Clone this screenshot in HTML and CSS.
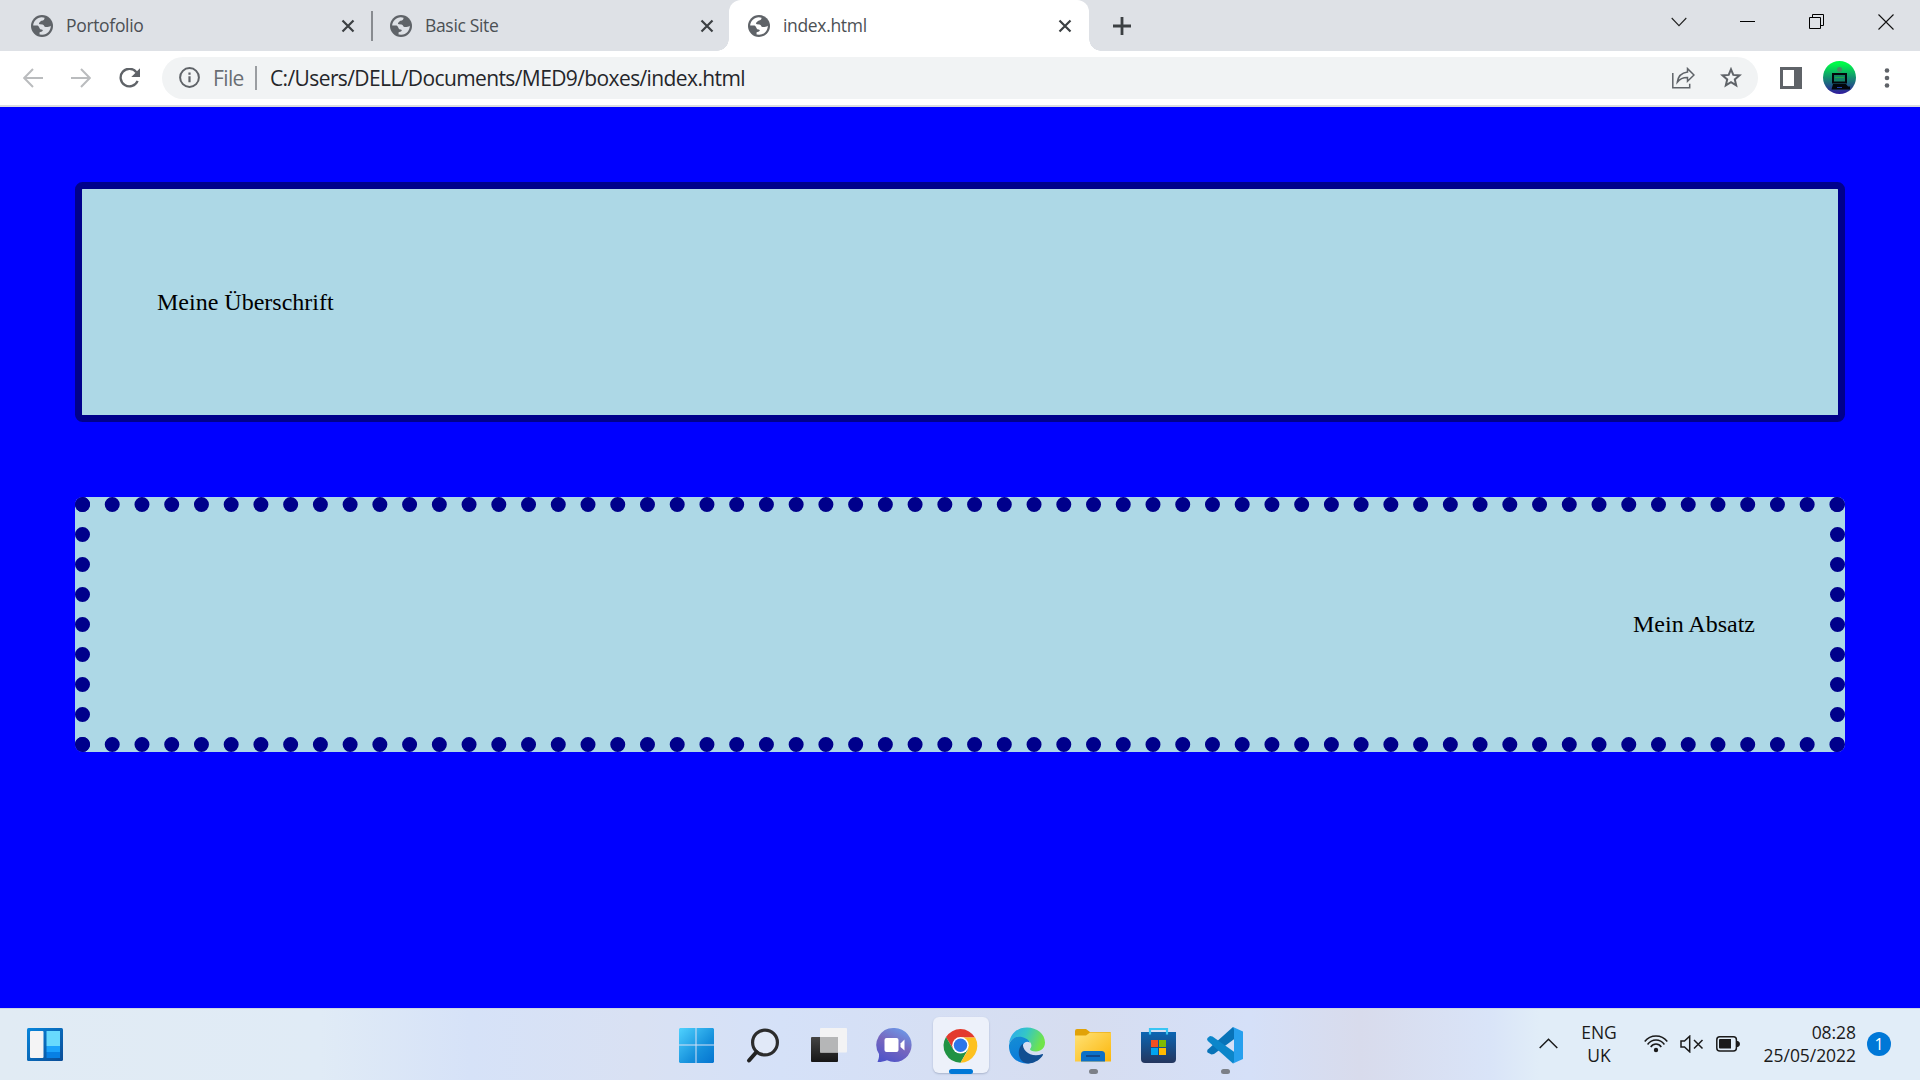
FILE: index.html
```html
<!DOCTYPE html>
<html lang="de">
<head>
<meta charset="utf-8">
<title>index.html</title>
<link rel="stylesheet" href="styles.css">
</head>
<body>
<svg class="defs" width="0" height="0" aria-hidden="true">
  <symbol id="globe" viewBox="0 0 22 22">
    <circle cx="11" cy="11" r="11" fill="#5f6368"/>
    <path fill="currentColor" d="M2.200 9.800C2.900 6 6 2.500 10.800 2.200L13.500 2.700C13.700 4 12.800 5.600 10.500 5.700C9.300 5.800 9.600 7 8.400 7.500C7.700 7.900 7.700 9.100 8.800 9.200L11.500 9.500C13.300 9.700 12.900 12 14.600 12.100C16.500 12.200 18 12 19.800 10.800C19.800 15.500 16.600 19.500 11.200 19.800L8.600 19.500L8.500 17.500C9.400 16.600 11.400 17 11.800 15.600C12 14.600 10.900 14.800 9.900 14.500C8.600 14.100 8.500 12.300 7.500 11.200C6.600 10.300 4.500 10.600 2.200 10.600Z"/>
  </symbol>
  <symbol id="cross" viewBox="0 0 14 14"><path d="M1.500 1.500L12.500 12.500M12.500 1.500L1.500 12.500" stroke="#3c4043" stroke-width="2.200"/></symbol>
</svg>

<header class="tabstrip">
  <div class="tab">
    <svg class="favicon"><use href="#globe"/></svg>
    <span class="tab-title">Portofolio</span>
    <svg class="tab-close"><use href="#cross"/></svg>
  </div>
  <div class="tab tab-second">
    <svg class="favicon"><use href="#globe"/></svg>
    <span class="tab-title">Basic Site</span>
    <svg class="tab-close"><use href="#cross"/></svg>
  </div>
  <div class="tab tab-active">
    <svg class="favicon"><use href="#globe"/></svg>
    <span class="tab-title">index.html</span>
    <svg class="tab-close"><use href="#cross"/></svg>
  </div>
  <svg class="new-tab" viewBox="0 0 18 18"><path d="M9 0V18M0 9H18" stroke="#3c4043" stroke-width="2.800"/></svg>
  <div class="window-buttons">
    <svg width="16" height="10" viewBox="0 0 16 10"><path d="M.7 1L8 8.700L15.300 1" fill="none" stroke="#222" stroke-width="1.100"/></svg>
    <svg width="15" height="15" viewBox="0 0 15 15"><path d="M0 7.500H15" stroke="#000"/></svg>
    <svg width="15" height="15" viewBox="0 0 15 15"><path d="M.5 3.500H11.500V14.500H.5ZM3.500 3.500V.5H14.500V11.500H11.500" fill="none" stroke="#000"/></svg>
    <svg width="16" height="16" viewBox="0 0 16 16"><path d="M.5 .5L15.500 15.500M15.500 .5L.5 15.500" stroke="#111" stroke-width="1.100"/></svg>
  </div>
</header>

<nav class="toolbar">
  <svg class="back" width="20" height="20" viewBox="0 0 20 20"><path d="M20 10H1.500M10 1L1.200 10L10 19" fill="none" stroke="#babcbe" stroke-width="2"/></svg>
  <svg class="forward" width="20" height="20" viewBox="0 0 20 20"><path d="M0 10H18.500M10 1L18.800 10L10 19" fill="none" stroke="#babcbe" stroke-width="2"/></svg>
  <svg class="reload" width="21" height="20" viewBox="0 0 21 20"><path d="M17.400 4.200A8.800 8.800 0 1 0 18.600 12.800" fill="none" stroke="#5f6368" stroke-width="2.300"/><path d="M21 .3V9H12.300Z" fill="#5f6368"/></svg>
  <div class="omnibox">
    <svg width="21" height="21" viewBox="0 0 21 21"><circle cx="10.500" cy="10.500" r="9.400" fill="none" stroke="#5f6368" stroke-width="2"/><path d="M10.500 9.300V15.300M10.500 5.600V7.800" stroke="#5f6368" stroke-width="2.200"/></svg>
    <span class="scheme">File</span>
    <span class="divider"></span>
    <span class="url">C:/Users/DELL/Documents/MED9/boxes/index.html</span>
    <svg class="share" width="23" height="22" viewBox="0 0 23 22"><path d="M.8 6V20.800H17.700V16.800" fill="none" stroke="#5f6368" stroke-width="1.500"/><path d="M15.500 1.600L22 8L15.500 14.200V10.600C10.900 10.500 8 11.800 5.300 15.200C6 9.800 9.400 5.900 15.500 5.100Z" fill="none" stroke="#5f6368" stroke-width="1.500"/></svg>
    <svg class="star" width="22" height="21" viewBox="0 0 22 21"><path d="M11 2.300L13.300 7.900L19.500 8.400L14.800 12.400L16.200 18.400L11 15.200L5.800 18.400L7.200 12.400L2.500 8.400L8.700 7.900Z" fill="none" stroke="#5f6368" stroke-width="2"/></svg>
  </div>
  <svg class="panel" width="22" height="22" viewBox="0 0 22 22"><path fill="#5f6368" fill-rule="evenodd" d="M0 0H22V22H0ZM3 3V19H14V3Z"/></svg>
  <svg class="avatar" width="33" height="33" viewBox="0 0 33 33">
    <defs><linearGradient id="av" x2="0" y2="1"><stop offset=".08" stop-color="#00fb48"/><stop offset=".5" stop-color="#149070"/><stop offset="1" stop-color="#31189e"/></linearGradient></defs>
    <circle cx="16.500" cy="16.500" r="16.500" fill="url(#av)"/><circle cx="16.500" cy="8.400" r="2.500" fill="#4d8a64"/>
    <path fill="#03060b" d="M9 12H24V22.500H9ZM10 23H23L25 25.500H27V28.500H8.500Z"/><path fill="#128066" d="M11 14H22V20.500H11Z"/><path d="M12 16.500H21" stroke="#1ba83f"/><path d="M14 26.500H19" stroke="#2040b0"/>
  </svg>
  <svg class="menu" width="6" height="20" viewBox="0 0 6 20"><g fill="#5f6368"><circle cx="3" cy="2.500" r="2.300"/><circle cx="3" cy="10" r="2.300"/><circle cx="3" cy="17.500" r="2.300"/></g></svg>
</nav>

<main class="page">
  <div class="box heading">Meine Überschrift</div>
  <div class="box paragraph">Mein Absatz</div>
</main>

<footer class="taskbar">
  <div class="widgets">
    <svg width="36" height="33" viewBox="0 0 36 33">
      <defs><linearGradient id="wg" x2="1" y2="1"><stop stop-color="#0786dc"/><stop offset="1" stop-color="#0b4c96"/></linearGradient></defs>
      <rect width="36" height="33" rx="1.500" fill="url(#wg)"/><rect x="3" y="3" width="13.500" height="27" rx="1" fill="#f4f4f5"/><path fill="#68dafd" d="M19.500 3H33V18H19.500Z"/><path fill="#1ba3fb" d="M19.500 18H33V24H19.500Z"/><path fill="#0780e4" d="M19.500 24H33V30H19.500Z"/>
    </svg>
  </div>
  <div class="apps">
    <div class="app"><svg viewBox="0 0 36 36">
      <defs><linearGradient id="win" gradientUnits="userSpaceOnUse" x1="0" y1="0" x2="36" y2="36"><stop stop-color="#4fd2fe"/><stop offset=".6" stop-color="#1690dc"/><stop offset="1" stop-color="#0472cf"/></linearGradient></defs>
      <path fill="url(#win)" d="M1 0H16.500V16.500H0V1ZM17.500 0H34L35 1V16.500H17.500ZM0 17.500H16.500V35H1L0 34ZM17.500 17.500H35V34L34 35H17.500Z"/></svg></div>
    <div class="app"><svg viewBox="0 0 36 36"><circle cx="20" cy="14.500" r="12.400" fill="#e1e9f8" stroke="#2c2c2c" stroke-width="3.200"/><path d="M11.500 24L4 32.500" stroke="#222" stroke-width="4" stroke-linecap="round"/></svg></div>
    <div class="app"><svg viewBox="0 0 36 36">
      <defs><linearGradient id="tv" x2="0" y2="1"><stop stop-color="#444"/><stop offset="1" stop-color="#161616"/></linearGradient></defs>
      <rect x="0" y="9" width="27" height="25" rx="1" fill="url(#tv)"/><rect x="9" y="0" width="27" height="24.500" rx="1" fill="#f3f3f4"/><path fill="#b5b6b7" d="M9 9H27V24.500H9Z"/></svg></div>
    <div class="app"><svg viewBox="0 0 36 36">
      <defs><linearGradient id="chat" x1=".8" x2=".3" y2="1"><stop stop-color="#6b9bea"/><stop offset=".5" stop-color="#7867be"/><stop offset="1" stop-color="#5054c8"/></linearGradient></defs>
      <path fill="url(#chat)" d="M17.500 0A17 17 0 1 1 10 32.200C7 33.500 3 34.300 .5 34C1.500 31.500 2.300 29 2 26A17 17 0 0 1 17.500 0Z"/><rect x="7.500" y="10" width="14" height="14" rx="2" fill="#fff"/><path fill="#fff" d="M23.500 15.500L27.500 11.500V22.500L23.500 19Z"/></svg></div>
    <div class="app app-current"><svg viewBox="0 0 36 36">
      <path fill="#e33b2e" d="M3 9A17 17 0 0 1 32 9.500H17.500L10 21Z"/><path fill="#209243" d="M3 9A17 17 0 0 0 17.500 34.700L25 21.500L10.300 21.500Z"/><path fill="#fdc120" d="M32.200 9.500A17 17 0 0 1 17.500 34.700L25 22L17.500 9.500Z"/><circle cx="17.500" cy="17.300" r="8.300" fill="#fff"/><circle cx="17.500" cy="17.300" r="6.700" fill="#2e76ea"/></svg></div>
    <div class="app"><svg viewBox="0 0 36 36">
      <defs><linearGradient id="e1" x2="1" y2=".3"><stop offset=".1" stop-color="#2cadea"/><stop offset=".5" stop-color="#34c6c7"/><stop offset="1" stop-color="#70e44b"/></linearGradient><linearGradient id="e2" x2=".5" y2="1"><stop stop-color="#168ed4"/><stop offset="1" stop-color="#0878da"/></linearGradient></defs>
      <path fill="url(#e1)" d="M0 16C1 6 8-.5 18-.5C28-.5 36 6 36 14.500C36 20 32 23.500 27 23.500C23 23.500 21 22.500 21 21C23 19 23.500 14 18 12C12 8 3 8 0 16Z"/><path fill="url(#e2)" d="M0 17.500C1 11 7 7.500 13 9C17 10 20 12 21 14.500C16 12 13 16 14 20C16 28 24 31 32 27.500C28 33 23 35.500 18 35.500C7 35.500-.5 27 0 17.500Z"/><path fill="#124f92" d="M14 15.500C13 23 22 30 33.500 26C34.500 26 34 27 33 28.500C29 33.500 23 36 17 35.300C8 32 8 20 14 15.500Z"/></svg></div>
    <div class="app app-open"><svg viewBox="0 0 36 36">
      <defs><linearGradient id="fo" x2="1" y2="1"><stop stop-color="#ffe276"/><stop offset="1" stop-color="#fbb60b"/></linearGradient></defs>
      <path fill="#e1a207" d="M0 3Q0 1 2 1H11L15 4H35Q36 4 36 6V15H0Z"/><path fill="url(#fo)" d="M0 7.500H11L15 4.500H36V33.500H0Z"/><path fill="#0b70c8" d="M6 33.500V26.500Q6 23 9.500 23H26.500Q30 23 30 26.500V33.500Z"/><path d="M11 28H25" stroke="#10488b" stroke-width="2"/></svg></div>
    <div class="app"><svg viewBox="0 0 36 36">
      <defs><linearGradient id="st" x2="0" y2="1"><stop stop-color="#0b65b3"/><stop offset="1" stop-color="#24365e"/></linearGradient></defs>
      <path fill="url(#st)" d="M0 4H35V31Q35 35 31 35H4Q0 35 0 31Z"/><path d="M9 6.500V1H26V6.500" fill="none" stroke="#38c5f4" stroke-width="2.200"/><path fill="#f25022" d="M10 12H17V19H10Z"/><path fill="#7fba00" d="M18 12H25V19H18Z"/><path fill="#00a4ef" d="M10 20H17V27H10Z"/><path fill="#ffb900" d="M18 20H25V27H18Z"/></svg></div>
    <div class="app app-open"><svg viewBox="0 0 36 36">
      <path fill="#0873b8" d="M26 -1L28 1V10.500L7 26L4.500 26.500L.5 24.500Q-.5 23 .8 21.500Z"/><path fill="#0c86ca" d="M.8 13Q-.5 11.500 .5 10L3 8L5.500 8.500L28 24.500V33.500L26 35.500Z"/><path fill="#27a0ee" d="M26 -1L36 3.500V31L26 35.500L27 33.500V1.500Z"/></svg></div>
  </div>
  <div class="tray">
    <svg class="chevron" width="19" height="11" viewBox="0 0 19 11"><path d="M.7 10L9.500 1.200L18.300 10" fill="none" stroke="#1a1a1a" stroke-width="1.500"/></svg>
    <div class="lang"><span>ENG</span><span>UK</span></div>
    <svg class="wifi" width="24" height="18" viewBox="0 0 24 18"><g fill="none" stroke="#1a1a1a" stroke-width="1.500"><path d="M.7 6.500C6.500 -.7 17.500 -.7 23.300 6.500"/><path d="M3.600 9.500C8 3.500 16 3.500 20.400 9.500"/><path d="M6.700 12C9.500 8 14.500 8 17.300 12"/></g><circle cx="12" cy="15" r="2.200" fill="#1a1a1a"/></svg>
    <svg class="sound" width="24" height="18" viewBox="0 0 24 18"><path d="M1 6H4.500L9.700 1.200V16.800L4.500 12H1ZM14 5L22.500 13.500M22.500 5L14 13.500" fill="none" stroke="#1a1a1a" stroke-width="1.500"/></svg>
    <svg class="battery" width="24" height="16" viewBox="0 0 24 16"><rect x=".8" y=".8" width="19.600" height="14.200" rx="3" fill="none" stroke="#1a1a1a" stroke-width="1.500"/><path fill="#1a1a1a" d="M3 4Q3 3 4 3H15V12.500H4Q3 12.500 3 11.500ZM21 5H22Q24 6 24 8T22 11H21Z"/></svg>
    <div class="clock"><span>08:28</span><span>25/05/2022</span></div>
    <span class="badge">1</span>
  </div>
</footer>
</body>
</html>
```
FILE: styles.css
```css
* { box-sizing: border-box; }
body {
  margin: 0;
  width: 1920px;
  height: 1080px;
  overflow: hidden;
  display: flex;
  flex-direction: column;
  font-family: "Open Sans", "Noto Sans", sans-serif;
  background: #00f;
}
svg { display: block; flex: none; }
.defs { position: absolute; }

.tabstrip {
  display: flex;
  align-items: center;
  height: 51px;
  background: #dee1e6;
}
.tab {
  display: flex;
  align-items: center;
  width: 359px;
  height: 51px;
  margin-left: 12px;
  padding: 0 16px 0 19px;
  color: #dee1e6;
}
.tab-second { margin-left: 0; position: relative; }
.tab-second::before {
  content: "";
  position: absolute;
  left: 0;
  top: 11px;
  width: 2px;
  height: 30px;
  background: #888b90;
}
.tab-active {
  position: relative;
  margin-left: -1px;
  width: 360px;
  padding-right: 17px;
  background: #fff;
  border-radius: 12px 12px 0 0;
  color: #fff;
}
.tab-active::before, .tab-active::after {
  content: "";
  position: absolute;
  bottom: 0;
  width: 12px;
  height: 12px;
}
.tab-active::before { left: -12px; background: radial-gradient(circle at 0 0, transparent 11.5px, #fff 12px); }
.tab-active::after { right: -12px; background: radial-gradient(circle at 100% 0, transparent 11.5px, #fff 12px); }
.favicon { width: 22px; height: 22px; }
.tab-title {
  flex: 1;
  margin-left: 13px;
  font-size: 17.5px;
  letter-spacing: -.33px;
  line-height: 51px;
  color: #4c5054;
}
.tab-close { width: 14px; height: 14px; }
.new-tab { width: 18px; height: 18px; margin-left: 24px; }
.window-buttons {
  display: grid;
  grid-template-columns: repeat(4, 69px);
  justify-items: center;
  align-items: center;
  margin: -8px 0 0 auto;
}

.toolbar {
  display: flex;
  align-items: center;
  height: 56px;
  padding: 0 0 1px 23px;
  background: #fff;
  border-bottom: 2px solid #dadce0;
}
.forward { margin-left: 28px; }
.reload { margin-left: 28px; }
.omnibox {
  display: flex;
  align-items: center;
  width: 1596px;
  height: 42px;
  margin-left: 22px;
  padding: 0 16px 0 17px;
  border-radius: 21px;
  background: #f1f3f4;
  font-size: 21px;
  line-height: 28px;
  letter-spacing: -.61px;
}
.scheme { width: 41px; margin-left: 13px; padding-top: 1px; color: #6a6e73; }
.divider { width: 2px; height: 24px; margin-left: 1px; background: #9a9da1; }
.url { flex: 1; margin-left: 13px; padding-top: 1px; color: #25262a; }
.star { margin-left: 25px; }
.panel { margin-left: 22px; }
.avatar { margin-left: 21px; }
.menu { margin-left: 28px; }

.page {
  height: 901px;
  padding: 75px;
  background: #00f;
  font-family: "Liberation Serif", serif;
  font-size: 24px;
  line-height: 75px;
}
.box { padding: 75px; background: #add8e6; border-radius: 7.5px; }
.heading { height: 240px; border: 7px solid #00008b; line-height: 76px; }
.paragraph { height: 255px; margin-top: 75px; border: 15px dotted #00008b; text-align: right; }

.taskbar {
  display: grid;
  grid-template-columns: 1fr 594px 1fr;
  height: 72px;
  border-top: 1px solid #ccd6e4;
  background: linear-gradient(90deg, #e1ebf4 0, #e0ebf6 320px, #d6e2f8 470px, #d9e1f3 640px, #d5e1f8 780px, #d6ddf0 1080px, #d5e0f8 1250px, #d8dbec 1360px, #d9e4f8 1490px, #e1edf8 1540px);
}
.widgets { padding: 19px 0 0 27px; }
.apps { display: grid; grid-template-columns: repeat(9, 66px); }
.app {
  position: relative;
  display: flex;
  justify-content: center;
  width: 56px;
  height: 56px;
  margin: 8px 0 0 6px;
  padding-top: 11px;
  border-radius: 6px;
}
.app svg { width: 36px; height: 36px; overflow: visible; }
.app-current { background: #edf1fa; box-shadow: 0 1px 2px #a9b4cc; }
.app-current::after, .app-open::after {
  content: "";
  position: absolute;
  bottom: -1px;
  width: 24px;
  height: 5px;
  border-radius: 3px;
  background: #0078d7;
}
.app-open::after { width: 9px; background: #7c8088; }
.tray {
  display: flex;
  align-items: center;
  padding: 0 0 2px 282px;
  font-size: 17.5px;
  color: #1a1a1a;
}
.lang, .clock { display: flex; flex-direction: column; line-height: 23px; }
.lang { width: 54px; margin-left: 14px; padding-top: 1px; align-items: center; letter-spacing: -.1px; }
.wifi { margin-left: 18px; }
.sound { margin-left: 12px; }
.battery { margin-left: 12px; }
.clock { width: 103px; margin-left: 13px; align-items: flex-end; letter-spacing: -.05px; }
.badge {
  width: 24px;
  height: 24px;
  margin-left: 11px;
  border-radius: 50%;
  background: #0078d7;
  color: #fff;
  font-size: 16px;
  line-height: 24px;
  text-align: center;
}
```
